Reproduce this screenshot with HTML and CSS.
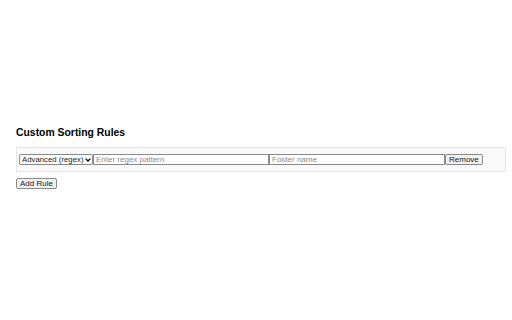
FILE: index.html
```html
<!DOCTYPE html>
<html>
<head>
<meta charset="utf-8">
<link rel="stylesheet" href="styles.css">
</head>
<body>
<div class="page">
  <h3 class="title">Custom Sorting Rules</h3>
  <div class="rule">
    <span class="selwrap"><select class="ctl sel"><option>Advanced (regex)</option></select><svg class="chev" width="6" height="4" viewBox="0 0 6 4"><path d="M0.6 0.6 L3 3 L5.4 0.6" fill="none" stroke="#000" stroke-width="1.3"/></svg></span><input class="ctl inp" placeholder="Enter regex pattern"><input class="ctl inp" placeholder="Folder name"><button class="ctl btn">Remove</button>
  </div>
  <button class="ctl btn add">Add Rule</button>
</div>
</body>
</html>
```
FILE: styles.css
```css
html, body { margin: 0; padding: 0; background: #fff; }
body { font-family: "Liberation Sans", Arial, sans-serif; }
.page { padding: 127px 6px 0 16px; }
.title { font-size: 10.4px; font-weight: bold; margin: 0 0 8px 0; line-height: 12px; color: #000; }
.rule {
  display: flex; align-items: center;
  padding: 0 2px;
  background: #f9f9f9; border: 1px solid #e6e6e6;
  box-sizing: border-box; height: 25px;
}
.ctl { font-family: "Liberation Sans", Arial, sans-serif; font-size: 8px; font-weight: normal; margin: 0; box-sizing: border-box; height: 11px; line-height: 9px; color: #222; }
.selwrap { position: relative; display: inline-flex; }
.sel { appearance: none; -webkit-appearance: none; width: 74px; padding: 0 0 0 2px; border: 1px solid #8a8a8a; border-radius: 2px; background: #fff; font-size: 7.8px; }
.chev { position: absolute; right: 2px; top: 4px; pointer-events: none; }
.inp { width: 176px; padding: 0 2px; border: 1px solid #8a8a8a; background: #fff; }
.inp::placeholder { color: #8a8a8a; }
.btn { padding: 0 3px; border: 1px solid #8a8a8a; border-radius: 2px; background: #f0f0f0; }
.add { margin-top: 6px; }
```
